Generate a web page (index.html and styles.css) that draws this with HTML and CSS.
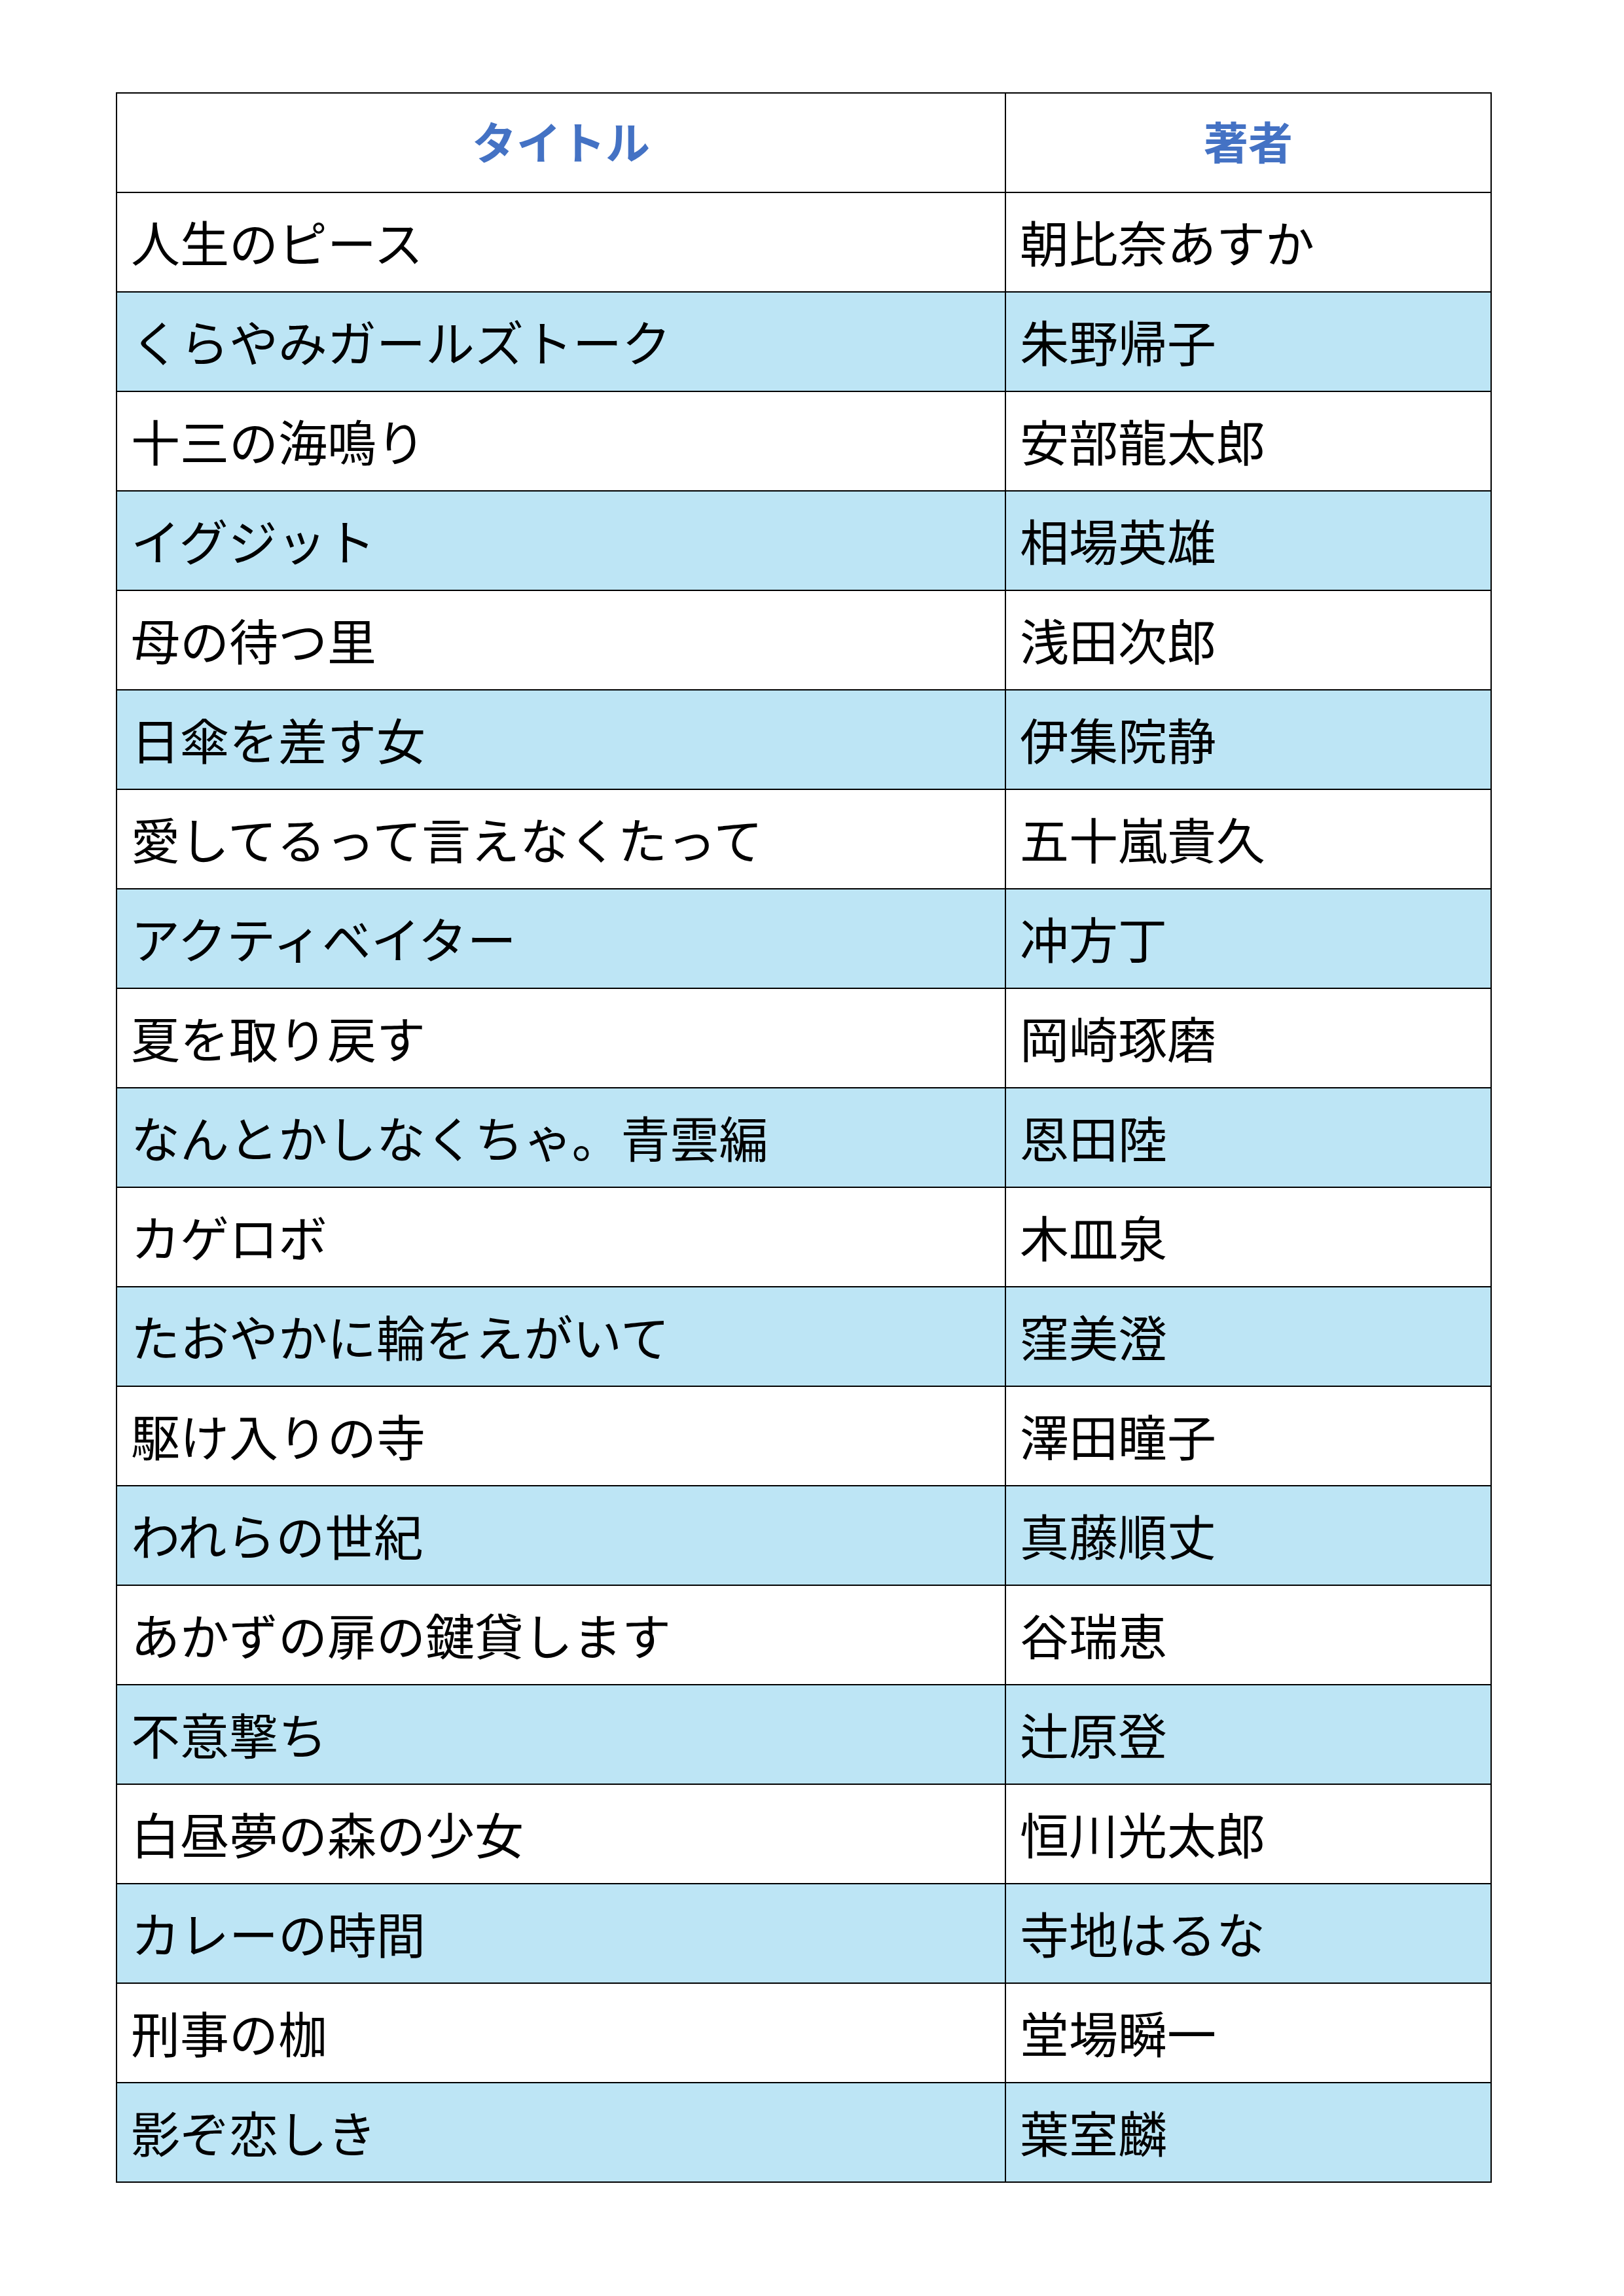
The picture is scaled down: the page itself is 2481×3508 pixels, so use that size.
FILE: index.html
```html
<!DOCTYPE html>
<html lang="ja">
<head>
<meta charset="utf-8">
<title>一覧</title>
<link rel="stylesheet" href="styles.css">
</head>
<body>
<div class="page">
<table class="list">
<thead>
<tr><th class="c-title">タイトル</th><th class="c-author">著者</th></tr>
</thead>
<tbody>
<tr><td>人生のピース</td><td>朝比奈あすか</td></tr>
<tr><td>くらやみガールズトーク</td><td>朱野帰子</td></tr>
<tr><td>十三の海鳴り</td><td>安部龍太郎</td></tr>
<tr><td>イグジット</td><td>相場英雄</td></tr>
<tr><td>母の待つ里</td><td>浅田次郎</td></tr>
<tr><td>日傘を差す女</td><td>伊集院静</td></tr>
<tr><td>愛してるって言えなくたって</td><td>五十嵐貴久</td></tr>
<tr><td>アクティベイター</td><td>冲方丁</td></tr>
<tr><td>夏を取り戻す</td><td>岡崎琢磨</td></tr>
<tr><td>なんとかしなくちゃ。青雲編</td><td>恩田陸</td></tr>
<tr><td>カゲロボ</td><td>木皿泉</td></tr>
<tr><td>たおやかに輪をえがいて</td><td>窪美澄</td></tr>
<tr><td>駆け入りの寺</td><td>澤田瞳子</td></tr>
<tr><td>われらの世紀</td><td>真藤順丈</td></tr>
<tr><td>あかずの扉の鍵貸します</td><td>谷瑞恵</td></tr>
<tr><td>不意撃ち</td><td>辻原登</td></tr>
<tr><td>白昼夢の森の少女</td><td>恒川光太郎</td></tr>
<tr><td>カレーの時間</td><td>寺地はるな</td></tr>
<tr><td>刑事の枷</td><td>堂場瞬一</td></tr>
<tr><td>影ぞ恋しき</td><td>葉室麟</td></tr>
</tbody>
</table>
</div>
</body>
</html>
```
FILE: styles.css
```css
html, body {
  margin: 0;
  padding: 0;
  background: #ffffff;
}
.page {
  padding: 141px 0 0 177px;
}
.list {
  border-collapse: collapse;
  width: 2096px;
  table-layout: fixed;
  font-family: "Noto Sans CJK JP", "Noto Sans", sans-serif;
  color: #000000;
}
.list th, .list td {
  border: 2px solid #000000;
  height: 146px;
  padding: 0 0 4px 21px;
  vertical-align: middle;
  white-space: nowrap;
  overflow: hidden;
}
.list th {
  font-size: 68px;
  font-weight: 700;
  color: #4472c4;
  text-align: center;
  padding: 0 0 6px 0;
  height: 144px;
  line-height: 1;
}
.list td {
  font-size: 75px;
  font-weight: 400;
  line-height: 1;
}
.c-title { width: 1356px; }
.c-author { width: 740px; }
.list tbody tr:nth-child(even) td {
  background: #bde5f5;
}
```
